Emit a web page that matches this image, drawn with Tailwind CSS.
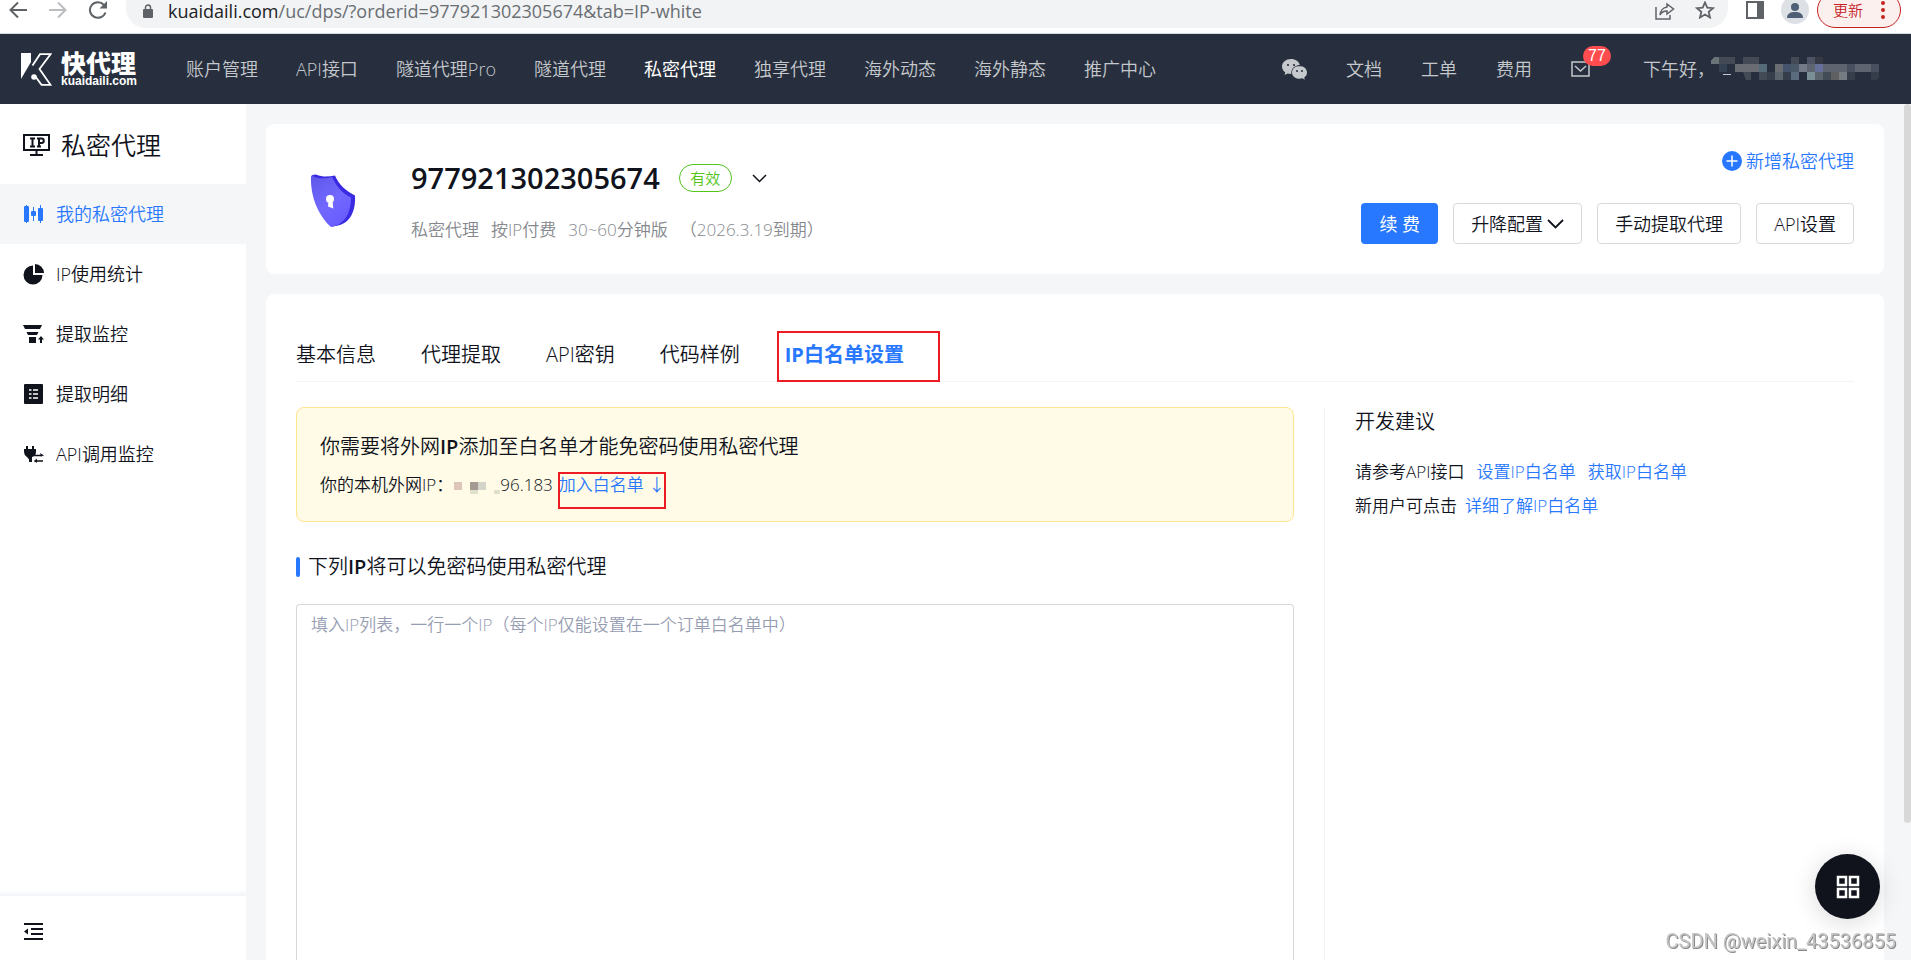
<!DOCTYPE html>
<html lang="zh-CN">
<head>
<meta charset="utf-8">
<title>私密代理 - 快代理</title>
<script src="https://cdn.jsdelivr.net/npm/@tailwindcss/browser@4"></script>
</head>
<body class="flex h-screen flex-col overflow-hidden bg-[#f5f6f8] font-['Open_Sans','Noto_Sans_CJK_SC',sans-serif] text-[18px] font-[350] leading-7 text-[#10131c]">

<!-- Browser toolbar -->
<div class="flex h-[34px] shrink-0 items-start overflow-hidden border-b border-[#cfdcdc] bg-white">
  <button aria-label="后退" class="ml-2 mt-[1px] text-[#5f6368]"><svg width="20" height="18" viewBox="0 0 20 18" fill="none" stroke="currentColor" stroke-width="2"><path d="M19 9H3M10 1.500L2.500 9l7.500 7.500"/></svg></button>
  <button aria-label="前进" class="ml-5 mt-[1px] text-[#bbbdc0]"><svg width="20" height="18" viewBox="0 0 20 18" fill="none" stroke="currentColor" stroke-width="2"><path d="M1 9h16M10 1.500L17.500 9 10 16.500"/></svg></button>
  <button aria-label="刷新" class="ml-5 mt-[1px] text-[#5f6368]"><svg width="20" height="18" viewBox="0 0 20 18" fill="none" stroke="currentColor" stroke-width="2"><path d="M17.500 11.500A8 7.700 0 1 1 16 4"/><path d="M19 0v7.500h-7.500z" fill="currentColor" stroke="none"/></svg></button>
  <div class="ml-[18px] flex h-7 flex-1 items-start rounded-b-[20px] bg-[#f1f3f4]">
    <svg class="ml-4 mt-1" width="12" height="14" viewBox="0 0 12 14"><rect x="1" y="5" width="10" height="9" rx="1" fill="#5f6368"/><path d="M3.500 6V3.500a2.500 2.500 0 0 1 5 0V6" fill="none" stroke="#5f6368" stroke-width="1.500"/></svg>
    <p class="ml-[14px] font-normal leading-[22px] text-[#6a6e73]"><span class="text-[#202124]">kuaidaili.com</span>/uc/dps/?orderid=977921302305674&amp;tab=IP-white</p>
    <button aria-label="分享" class="ml-auto mt-[2px] text-[#5f6368]"><svg width="20" height="18" viewBox="0 0 20 18" fill="none" stroke="currentColor" stroke-width="1.500"><path d="M1 5v12h14v-4"/><path d="M12 2l6.500 5-6.500 5V9C8.500 9 6.500 10 5 13c.3-4 3-7.500 7-8z"/></svg></button>
    <button aria-label="收藏" class="ml-5 mr-[13px] mt-[1px] text-[#5f6368]"><svg width="20" height="18" viewBox="0 0 20 18" fill="none" stroke="currentColor" stroke-width="1.800"><path d="M10 1.500l2.300 5.200 5.700.5-4.300 3.700 1.300 5.600-5-3-5 3 1.300-5.600L2 7.200l5.700-.5z"/></svg></button>
  </div>
  <button aria-label="侧边栏" class="ml-[18px] mt-[1px]"><svg width="18" height="18" viewBox="0 0 18 18"><rect x="1" y="1" width="16" height="16" fill="none" stroke="#5f6368" stroke-width="2"/><path d="M11 1h6v16h-6z" fill="#5f6368"/></svg></button>
  <button aria-label="用户" class="ml-[17px] -mt-1 size-7 overflow-hidden rounded-full bg-[#dde1e6]"><svg width="28" height="28" viewBox="0 0 28 28" fill="#4f6076"><circle cx="14" cy="11" r="4"/><path d="M6 22c0-5 4-6 8-6s8 1 8 6z"/></svg></button>
  <button class="-mt-2 ml-2 mr-[10px] flex h-9 w-[84px] items-center justify-between rounded-full border border-[#c5221f] bg-[#fcf0ef] pl-[15px] pr-[15px] text-[15px] text-[#c5221f]">更新<svg width="4" height="20" viewBox="0 0 4 20" fill="currentColor"><circle cx="2" cy="3" r="2"/><circle cx="2" cy="10" r="2"/><circle cx="2" cy="17" r="2"/></svg></button>
</div>

<!-- Site header -->
<header class="flex h-[70px] shrink-0 items-center bg-[#272f3e] text-[#c5c8cc]">
  <a href="#" aria-label="快代理" class="ml-[21px] flex w-[165px] items-center gap-[9px] text-white">
    <svg width="31" height="33" viewBox="0 0 31 33"><path d="M0 0h10v9L0 26z" fill="#fff"/><path d="M11.500 12.500L19 1.200h10.500L18.500 16l11 15.800h-9L14 23" fill="none" stroke="#fff" stroke-width="1.800"/><circle cx="13" cy="24" r="2.800" fill="#fff"/></svg>
    <span class="flex flex-col"><b class="text-[25px] font-black leading-[24px]">快代理</b><span class="font-['Liberation_Sans',sans-serif] text-[12px] font-bold leading-[12px]">kuaidaili.com</span></span>
  </a>
  <nav class="flex gap-[38px] whitespace-nowrap">
    <a href="#">账户管理</a><a href="#">API接口</a><a href="#">隧道代理Pro</a><a href="#">隧道代理</a><a href="#" class="font-normal text-white">私密代理</a><a href="#">独享代理</a><a href="#">海外动态</a><a href="#">海外静态</a><a href="#">推广中心</a>
  </nav>
  <div class="ml-auto mr-[30px] flex items-center gap-[39px] whitespace-nowrap">
    <a href="#" aria-label="微信"><svg width="25" height="21" viewBox="0 0 25 21"><path d="M9 0C4 0 0 3.300 0 7.600c0 2.500 1.300 4.500 3.300 5.900L2.500 16l3.200-1.500c1 .3 2.200.5 3.600.5C9 10 12 6.500 17.800 6 17 2.500 13.500 0 9 0z" fill="#c5c8cc"/><path d="M17.500 7c-4.200 0-7.500 2.800-7.500 6.400s3.300 6.300 7.500 6.300c1 0 2-.2 2.900-.4l2.500 1.400-.7-2.200c1.700-1.200 2.800-3 2.800-5.100 0-3.600-3.400-6.400-7.500-6.400z" fill="#c5c8cc"/><g fill="#272f3e"><circle cx="6" cy="6" r="1.100"/><circle cx="12" cy="6" r="1.100"/><circle cx="15" cy="12" r="1"/><circle cx="20" cy="12" r="1"/></g></svg></a>
    <a href="#">文档</a><a href="#">工单</a><a href="#">费用</a>
    <a href="#" class="relative mr-[14px]" aria-label="消息"><svg width="19" height="16" viewBox="0 0 19 16" fill="none" stroke="#c5c8cc" stroke-width="1.500"><rect x="1" y="1" width="17" height="14"/><path d="M4 5l5.500 5L15 5"/></svg><span class="absolute -top-[15px] left-[12px] h-5 w-7 rounded-full bg-[#ff4d4f] text-center font-['Liberation_Sans',sans-serif] text-[16px] font-normal leading-5 text-white">77</span></a>
    <span class="flex items-center">下午好，<svg class="-ml-1" width="170" height="24" viewBox="0 0 170 24" shape-rendering="crispEdges">
      <path d="M3 0h5v7H0V3z" fill="#6a7378"/><path d="M8 0h16v7H8zM32 0h16v7H32zM80 0h8v7h-8z" fill="#444b57"/><path d="M96 0h8v7h-8z" fill="#4e5366"/><path d="M104 0h8v7h-8z" fill="#353944"/>
      <path d="M8 7h8v8H8z" fill="#334152"/><path d="M24 7h24v8H24zM64 7h8v8h-8z" fill="#696c73"/><path d="M48 7h8v8h-8z" fill="#566b78"/><path d="M72 7h8v8h-8z" fill="#44526b"/><path d="M80 7h8v8h-8z" fill="#4a5868"/><path d="M88 7h8v8h-8z" fill="#757a88"/><path d="M96 7h8v8h-8zM112 7h24v8h-24zM144 7h16v8h-16z" fill="#5f6570"/><path d="M104 7h8v8h-8z" fill="#66709a"/><path d="M136 7h8v8h-8zM160 7h8v8h-8z" fill="#485060"/>
      <path d="M12 17h8v1h-8z" fill="#c5c8cc"/><path d="M32 15h8v8h-5zM48 15h8v8h-8zM112 15h8v8h-8z" fill="#434b57"/><path d="M56 15h8v8h-8zM72 15h8v8h-8zM136 15h8v8h-8zM160 15h8v5l-3 3h-5z" fill="#363e4b"/><path d="M64 15h8v8h-8zM104 15h8v8h-8z" fill="#5b646c"/><path d="M80 15h8v8h-8z" fill="#5a6b7e"/><path d="M96 15h8v8h-8z" fill="#7a9096"/><path d="M120 15h8v8h-8z" fill="#5e6062"/><path d="M128 15h8v8h-8z" fill="#757d82"/>
    </svg></span>
  </div>
</header>

<div class="flex min-h-0 flex-1">
  <!-- Sidebar -->
  <aside class="flex w-[246px] shrink-0 flex-col bg-white">
    <h1 class="flex h-20 items-center gap-[11px] pl-[23px] pt-px text-[25px] leading-9"><svg width="27" height="24" viewBox="0 0 27 24" fill="none" stroke="currentColor" stroke-width="2"><path d="M1 2h25v15H1zM13.500 17v5M7 22h13"/><path d="M7 5.500h5M9.500 5.500v8M7 13.500h5M14 5.500h4.500a2 2 0 0 1 0 4.500H16M16 5.500v8M14 13.500h4"/></svg>私密代理</h1>
    <nav class="flex flex-col">
      <a href="#" class="flex h-[60px] items-center gap-3 bg-[#f5f6f8] pl-[23px] text-[#2878ff]"><svg width="21" height="20" viewBox="0 0 21 20" fill="currentColor"><rect x="1" y="2" width="5" height="16" rx="1"/><path d="M3 1h1v18H3zM10 3h1v14h-1zM17 1h1v18h-1z"/><rect x="8" y="7" width="5" height="5" rx="1"/><rect x="15" y="4" width="5" height="13" rx="1"/></svg>我的私密代理</a>
      <a href="#" class="flex h-[60px] items-center gap-3 pl-[23px]"><svg width="21" height="21" viewBox="0 0 21 21" fill="currentColor"><path d="M10 1.500V11h9.500A9.500 9.500 0 1 1 10 1.500z"/><path d="M12 0a9 9 0 0 1 9 9h-9z"/></svg>IP使用统计</a>
      <a href="#" class="flex h-[60px] items-center gap-3 pl-[23px]"><svg width="21" height="20" viewBox="0 0 21 20" fill="currentColor"><path d="M0 1h19l-2 4H2zM3.500 8h12l-1.500 3H5zM6 13h7v6H6z"/><path d="M18 12l3 3.500h-2V19h-2v-3.500h-2z"/></svg>提取监控</a>
      <a href="#" class="flex h-[60px] items-center gap-3 pl-[23px]"><svg width="21" height="20" viewBox="0 0 21 20"><rect x="1" width="19" height="20" rx="1" fill="currentColor"/><path d="M6 6h2.500M10 6h5M6 10h2.500M10 10h5M6 14h2.500M10 14h5" stroke="#fff" stroke-width="1.500"/></svg>提取明细</a>
      <a href="#" class="flex h-[60px] items-center gap-3 pl-[23px]"><svg width="21" height="20" viewBox="0 0 21 20" fill="currentColor"><path d="M3 2h2v3h4V2h2v3h2v3c0 3-2 4.500-4 5v5H6v-2.500L4 13C2 12 1 10 1 7V5h2z"/><path d="M11 11.500h8M11.500 17h8.500" stroke="currentColor" stroke-width="1.300"/><path d="M17 9l4 2.500-3 1zM14 14.500L11 17l3 2z"/></svg>API调用监控</a>
    </nav>
    <div class="mt-auto h-[6px] bg-linear-to-b from-white to-[#f1f3f6]"></div>
    <div class="flex h-16 items-center pl-[23px] pt-2"><button aria-label="收起菜单"><svg width="21" height="18" viewBox="0 0 21 18" fill="currentColor"><path d="M1 0h19v2H1zM8 5h12v2H8zM8 10h12v2H8zM1 15h19v2H1zM1 8.500L5 5.500v6z"/></svg></button></div>
  </aside>

  <!-- Content -->
  <main class="flex min-w-0 flex-1 flex-col gap-5 pl-5 pr-5 pt-5">
    <section class="flex h-[150px] shrink-0 justify-between rounded-lg bg-white pl-[44px] pr-[30px]">
      <div class="flex">
        <svg class="mt-[50px]" width="46" height="55" viewBox="0 0 46 55"><defs><linearGradient id="g" x1="0" y1="0" x2=".6" y2="1"><stop offset="0" stop-color="#5e57e8"/><stop offset=".6" stop-color="#7268ff"/><stop offset="1" stop-color="#6a5cff"/></linearGradient></defs><path d="M2 1l4-.5c7 3 13 2 19 1 4 9 10 15 20 20 1 17-6 31-24 31z" fill="#3a2be0"/><path d="M1 1.500C8 5 15 5 22 3c4 9 10 16 19 20.500 0 15-6 27-20 29.500C10 43 0 25 1 1.500z" fill="url(#g)"/><circle cx="20" cy="25" r="4" fill="#fff"/><path d="M18.500 27h4l.8 7.500-5.300-2z" fill="#fff"/></svg>
        <div class="ml-[55px] pt-9">
          <div class="flex h-9 items-center"><h2 class="text-[29px] font-semibold leading-9">977921302305674</h2><span class="ml-[19px] h-7 w-[53px] rounded-full border border-[#52c41a] text-center text-[15px] leading-[26px] text-[#52c41a]">有效</span><button aria-label="展开" class="ml-5"><svg width="15" height="9" viewBox="0 0 15 9" fill="none" stroke="currentColor" stroke-width="1.500"><path d="M1 1l6.500 6.500L14 1"/></svg></button></div>
          <p class="mt-5 flex gap-3 text-[17px] text-[#85888d]"><span>私密代理</span><span>按IP付费</span><span>30~60分钟版</span><span>（2026.3.19到期）</span></p>
        </div>
      </div>
      <div class="flex flex-col items-end pt-[23px]">
        <a href="#" class="flex items-center gap-1 text-[#2878ff]"><svg width="20" height="20" viewBox="0 0 20 20"><circle cx="10" cy="10" r="10" fill="currentColor"/><path d="M10 4.500v11M4.500 10h11" stroke="#fff" stroke-width="1.500"/></svg>新增私密代理</a>
        <div class="mt-7 flex gap-[15px]">
          <button class="h-[41px] rounded bg-[#2878ff] px-[18px] font-normal text-white">续 费</button>
          <button class="flex h-[41px] items-center gap-1 rounded border border-[#d9d9d9] px-[17px]">升降配置<svg width="17" height="10" viewBox="0 0 17 10" fill="none" stroke="currentColor" stroke-width="1.800"><path d="M1 1l7.500 7.500L16 1"/></svg></button>
          <button class="h-[41px] rounded border border-[#d9d9d9] px-[17px]">手动提取代理</button>
          <button class="h-[41px] rounded border border-[#d9d9d9] px-[17px]">API设置</button>
        </div>
      </div>
    </section>

    <section class="flex min-h-0 flex-1 flex-col rounded-t-lg bg-white px-[30px] pt-[37px]">
      <nav class="flex shrink-0 border-b border-[#f3f4f5] text-[20px]">
        <a href="#" class="mr-[45px] py-[10px]">基本信息</a><a href="#" class="mr-[45px] py-[10px]">代理提取</a><a href="#" class="mr-[45px] py-[10px]">API密钥</a><a href="#" class="mr-[37px] py-[10px]">代码样例</a>
        <a href="#" class="-mb-px w-[163px] border-2 border-[#ed1c24] px-[6px] pb-[11px] pt-2 font-bold text-[#2878ff]">IP白名单设置</a>
      </nav>
      <div class="mt-[25px] flex min-h-0 flex-1 gap-[30px]">
        <div class="flex min-w-0 flex-1 flex-col">
          <div class="h-[115px] shrink-0 rounded-lg border border-[#ffe58f] bg-[#fffbe6] pl-[23px] pt-[25px]">
            <p class="text-[20px] leading-7">你需要将外网<b class="font-semibold">IP</b>添加至白名单才能免密码使用私密代理</p>
            <p class="mt-[10px] flex text-[17px] leading-7">你的本机外网IP：<svg class="-ml-[5px] mt-[6px]" width="52" height="18" viewBox="0 0 52 18"><path d="M6 5h8v8H6z" fill="#dcc6ba"/><path d="M22 5h8v8h-8z" fill="#a39a92"/><path d="M30 5h8v8h-8z" fill="#d3d5cb"/><path d="M22 13h8v4h-8zM46 13h6v4h-6z" fill="#dfe0cb"/></svg>96.183<a href="#" class="relative ml-[6px] whitespace-nowrap text-[#2878ff]">加入白名单 ↓<span class="absolute -left-px top-px h-[37px] w-[108px] border-2 border-[#ed1c24]"></span></a></p>
          </div>
          <label for="ips" class="mt-[31px] flex shrink-0 items-center text-[20px] leading-7"><i class="mr-2 h-5 w-1 rounded-sm bg-[#2878ff]"></i><span>下列<b class="font-semibold">IP</b>将可以免密码使用私密代理</span></label>
          <textarea id="ips" class="mt-[23px] min-h-0 flex-1 resize-none rounded-t border border-b-0 border-[#d9d9d9] px-[14px] py-[6px] text-[17px] leading-7 outline-none placeholder:text-[#969db2]" placeholder="填入IP列表，一行一个IP（每个IP仅能设置在一个订单白名单中）"></textarea>
        </div>
        <aside class="w-[530px] shrink-0 border-l border-[#f3f4f5] pl-[30px] pt-px text-[17px]">
          <h3 class="text-[20px] leading-7">开发建议</h3>
          <p class="mt-[19px] leading-[34px]">请参考API接口<a href="#" class="ml-3 text-[#2878ff]">设置IP白名单</a><a href="#" class="ml-3 text-[#2878ff]">获取IP白名单</a></p>
          <p class="leading-[34px]">新用户可点击<a href="#" class="ml-2 text-[#2878ff]">详细了解IP白名单</a></p>
        </aside>
      </div>
    </section>
  </main>
  <div class="flex w-[7px] shrink-0 flex-col"><div class="h-[84%] rounded-full bg-[#d8d8d8]"></div></div>
</div>

<button aria-label="工具" class="fixed bottom-[41px] right-[31px] flex size-[65px] items-center justify-center rounded-full bg-[#10131c] shadow-[0_4px_24px_rgba(0,0,0,0.15)]"><svg width="24" height="24" viewBox="0 0 24 24" fill="none" stroke="#fff" stroke-width="2.500"><path d="M2 2h8v8H2zM14 2h8v8h-8zM2 14h8v8H2zM14 14h8v8h-8z"/></svg></button>
<p class="fixed bottom-[5px] right-[15px] font-['Roboto',sans-serif] text-[20px] font-normal leading-7 text-[#c4c4c4] [text-shadow:1px_1px_0_#888]">CSDN @weixin_43536855</p>
</body>
</html>
